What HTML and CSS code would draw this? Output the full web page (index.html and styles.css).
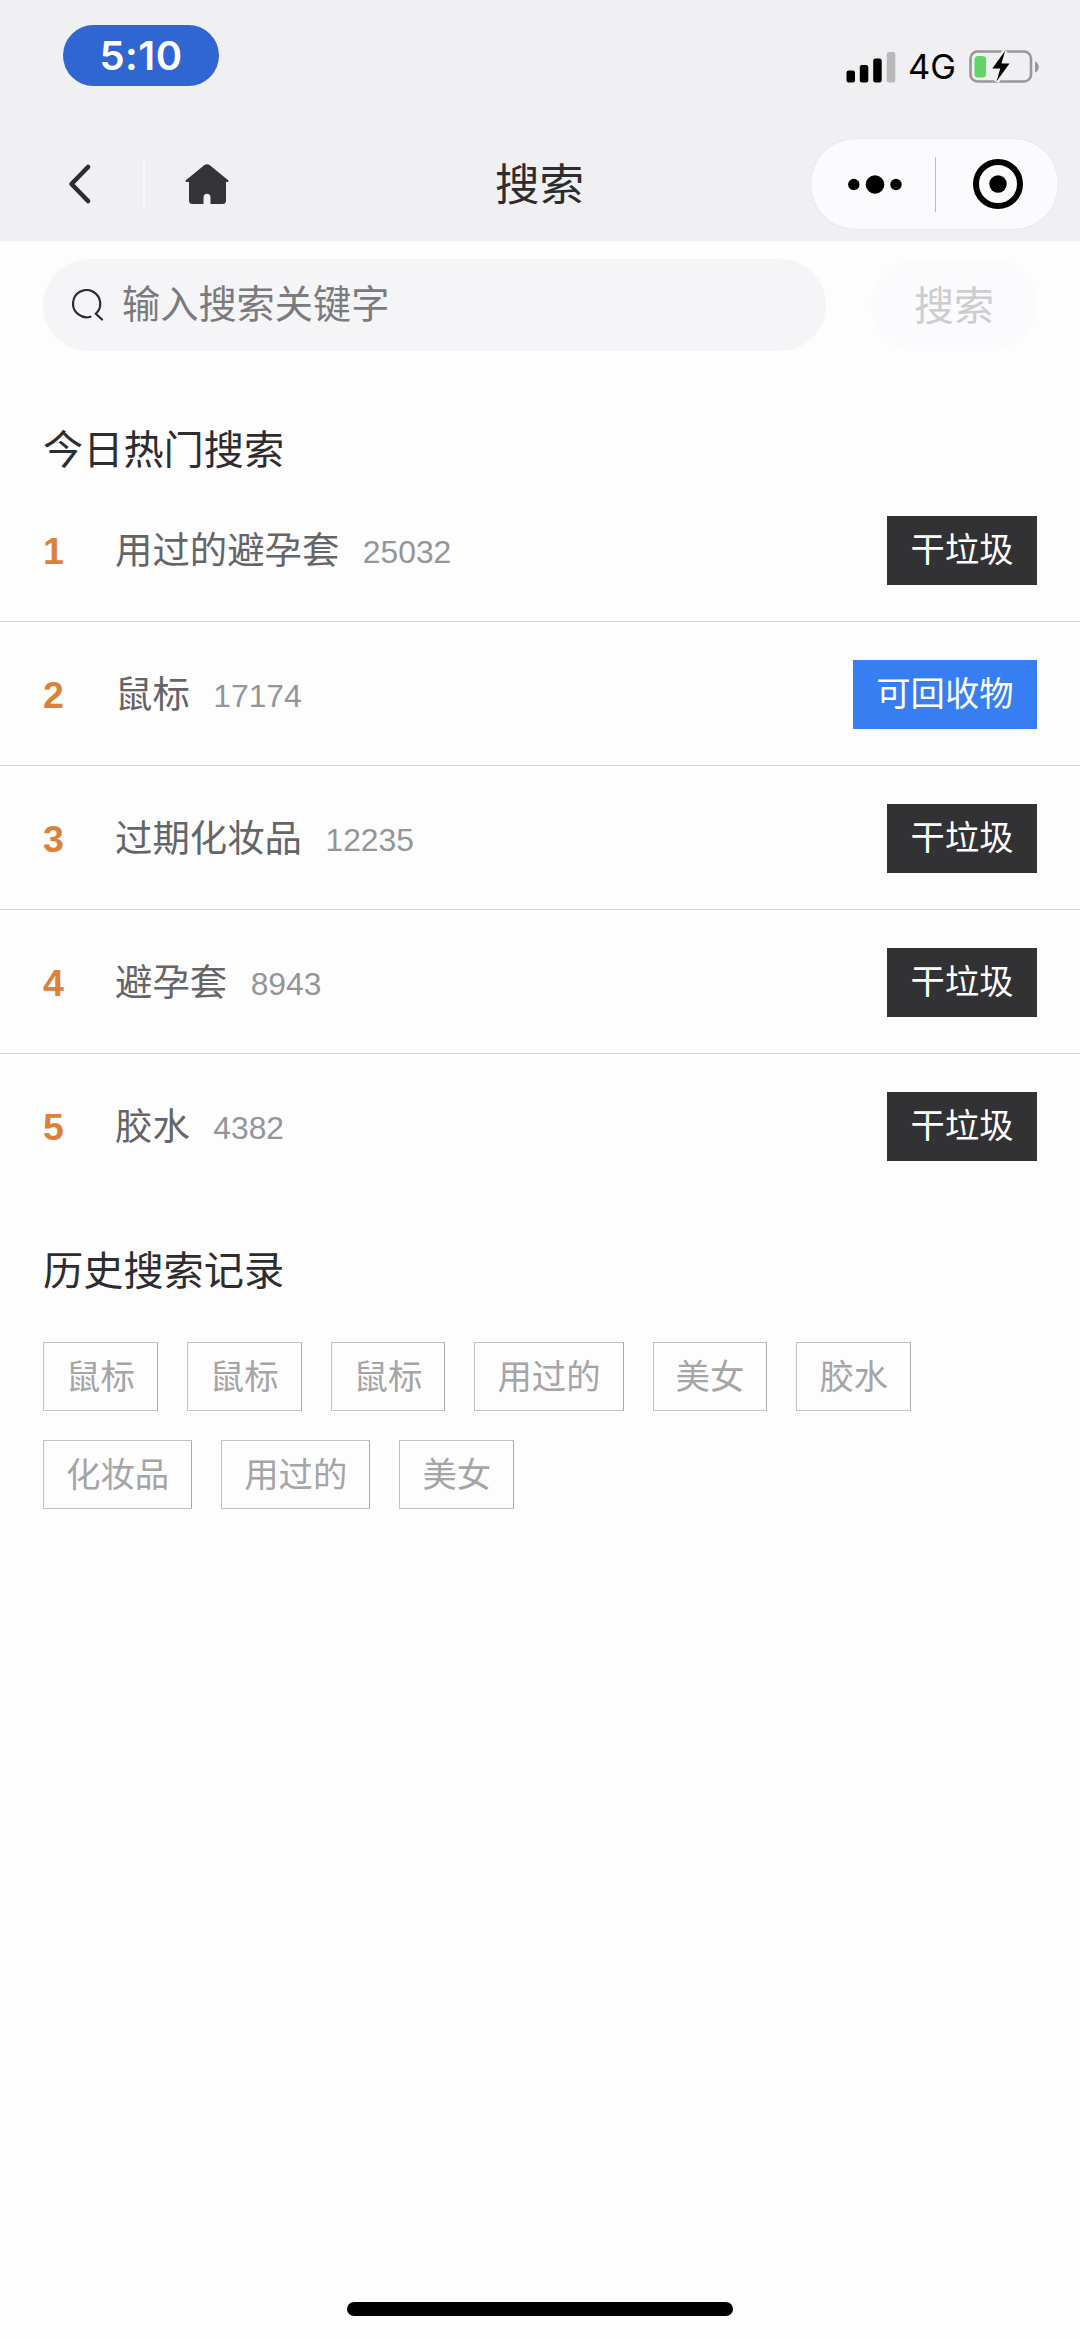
FILE: index.html
```html
<!DOCTYPE html>
<html lang="zh-CN">
<head>
<meta charset="utf-8">
<title>搜索</title>
<link rel="stylesheet" href="styles.css">
</head>
<body>
<div class="screen">
  <header class="header">
    <div class="status">
      <div class="time">5:10</div>
      <div class="status-right">
        <svg class="signal" width="50" height="32" viewBox="0 0 50 32">
          <rect x="0.5" y="19.5" width="8.5" height="12" rx="2.2"/>
          <rect x="13.8" y="14" width="8.5" height="17.5" rx="2.2"/>
          <rect x="27.2" y="7.5" width="8.5" height="24" rx="2.2"/>
          <rect x="40.8" y="1" width="8.5" height="30.5" rx="2.2" fill="#b9b8bb"/>
        </svg>
        <span class="network">4G</span>
        <svg class="battery" width="72" height="36" viewBox="0 0 72 36">
          <rect x="1.5" y="2.5" width="60.5" height="30" rx="7" fill="none" stroke="#99979b" stroke-width="2.6"/>
          <path d="M66 12.5c5 1.500 5 9.500 0 11z" fill="#99979b"/>
          <rect x="5.500" y="7" width="11.500" height="21.500" rx="3.500" fill="#62d367"/>
          <path d="M36 2 23.300 19.500h8L27.500 32.500 40.500 14.500h-8z" stroke="#f0eff1" stroke-width="5"/>
          <path d="M36 2 23.300 19.500h8L27.500 32.500 40.500 14.500h-8z"/>
        </svg>
      </div>
    </div>
    <div class="nav">
      <div class="nav-left">
        <svg width="24" height="42" viewBox="0 0 24 42"><path d="M20 4 3.500 21 20 38" fill="none" stroke="#2d2c2f" stroke-width="4.600" stroke-linecap="round" stroke-linejoin="round"/></svg>
        <span class="nav-divider"></span>
        <svg width="44" height="42" viewBox="0 0 44 42"><path d="M19.500 2Q22 .500 24.500 2L43.500 17.500Q44 19 42 19H41V37.500Q41 41 37.500 41H25.500V34.500Q25.500 30.800 22 30.800T18.500 34.500V41H7.500Q4 41 4 37.500V19H2Q0 19 .500 17.500Z" fill="#343336"/></svg>
      </div>
      <h1 class="title">搜索</h1>
      <div class="capsule">
        <svg width="54" height="20" viewBox="0 0 54 20"><circle cx="5.800" cy="10.500" r="5.700"/><circle cx="27" cy="10.500" r="9.300"/><circle cx="48" cy="10.500" r="5.700"/></svg>
        <span class="capsule-divider"></span>
        <svg width="50" height="50" viewBox="0 0 50 50"><circle cx="25" cy="25" r="22" fill="none" stroke="#000" stroke-width="6"/><circle cx="25" cy="25" r="8.700"/></svg>
      </div>
    </div>
  </header>

  <main class="content">
    <div class="search">
      <div class="search-box">
        <svg width="32" height="32" viewBox="0 0 32 32"><path d="M18.500 27.700A13.600 13.600 0 1 1 23.800 24.700L30 30.500" fill="none" stroke="#2d2c2f" stroke-width="2.200" stroke-linecap="round"/></svg>
        <span class="placeholder">输入搜索关键字</span>
      </div>
      <div class="search-button">搜索</div>
    </div>

    <h2 class="heading heading-hot">今日热门搜索</h2>
    <ol class="hot">
      <li class="row"><span class="rank">1</span><span class="name">用过的避孕套</span><span class="count">25032</span><span class="tag">干垃圾</span></li>
      <li class="row"><span class="rank">2</span><span class="name">鼠标</span><span class="count">17174</span><span class="tag tag-recycle">可回收物</span></li>
      <li class="row"><span class="rank">3</span><span class="name">过期化妆品</span><span class="count">12235</span><span class="tag">干垃圾</span></li>
      <li class="row"><span class="rank">4</span><span class="name">避孕套</span><span class="count">8943</span><span class="tag">干垃圾</span></li>
      <li class="row"><span class="rank">5</span><span class="name">胶水</span><span class="count">4382</span><span class="tag">干垃圾</span></li>
    </ol>

    <h2 class="heading heading-history">历史搜索记录</h2>
    <div class="history">
      <span class="chip">鼠标</span><span class="chip">鼠标</span><span class="chip">鼠标</span><span class="chip">用过的</span><span class="chip">美女</span><span class="chip">胶水</span><span class="chip">化妆品</span><span class="chip">用过的</span><span class="chip">美女</span>
    </div>
  </main>
  <div class="home-bar"></div>
</div>
</body>
</html>
```
FILE: styles.css
```css
* { box-sizing: border-box; }
body {
  margin: 0;
  background: #fefdfe;
  color: #2d2c2f;
  font-family: "Liberation Sans", "Noto Sans CJK SC", sans-serif;
}
svg { display: block; flex: none; }
h1, h2, ol { margin: 0; padding: 0; font-weight: 400; list-style: none; }

.screen {
  width: 1080px;
  height: 2339px;
  display: flex;
  flex-direction: column;
  overflow: hidden;
}

.header { height: 241px; background: #f0eff1; }
.status {
  height: 138px;
  padding: 25px 39px 0 63px;
  display: flex;
  justify-content: space-between;
  align-items: flex-start;
}
.time {
  width: 156px;
  height: 61px;
  border-radius: 31px;
  background: #2f66d2;
  color: #fff;
  font: 600 40px/62px Inter, sans-serif;
  letter-spacing: 0.5px;
  text-align: center;
}
.status-right { display: flex; align-items: center; padding-top: 24px; }
.network {
  width: 50px;
  margin: 0 11px 0 12px;
  color: #000;
  font: 400 34.5px/36px Inter, sans-serif;
}

.nav {
  height: 92px;
  padding: 0 21px 0 68px;
  display: grid;
  grid-template-columns: 427px 1fr 249px;
  align-items: center;
}
.nav-left { display: flex; align-items: center; }
.nav-divider { width: 2px; height: 52px; margin: 0 40px 0 51px; background: #f8f7f9; }
.title { padding-top: 4px; font-size: 44.5px; line-height: 64px; }
.capsule {
  height: 92px;
  padding: 0 35px 0 37px;
  display: flex;
  align-items: center;
  justify-content: space-between;
  border: 1px solid #e9e7ea;
  border-radius: 46px;
  background: #fbfafc;
}
.capsule-divider { width: 1px; height: 55px; margin-left: -5px; background: #bdbbbf; }

.search { display: flex; justify-content: space-between; padding: 18px 43px 0; }
.search-box {
  width: 783px;
  height: 92px;
  padding-left: 29px;
  display: flex;
  align-items: center;
  gap: 18px;
  border-radius: 46px;
  background: #f5f4f6;
}
.placeholder { color: #7b7a7d; font-size: 38.2px; line-height: 56px; }
.search-button {
  width: 166px;
  height: 92px;
  border-radius: 46px;
  background: #fbfafc;
  color: #cdccce;
  font-size: 40px;
  line-height: 94px;
  text-align: center;
}

.heading { padding-left: 43px; font-size: 40.2px; line-height: 60px; }
.heading-hot { margin: 70px 0 -3px; }
.row {
  height: 144px;
  padding: 1px 43px 0;
  display: flex;
  align-items: center;
  border-bottom: 1px solid #d6d4d8;
}
.row:last-child { border-bottom-color: transparent; }
.rank { width: 72px; padding-top: 1px; color: #dd8038; font-size: 37.5px; font-weight: 700; line-height: 44px; }
.name { padding-top: 2px; color: #656467; font-size: 37.4px; line-height: 54px; }
.count { margin-left: 23.5px; padding-top: 4px; color: #929699; font-size: 31.8px; line-height: 40px; }
.tag {
  height: 69px;
  margin-left: auto;
  padding: 0 23.5px;
  background: #323134;
  color: #fff;
  font-size: 34.3px;
  line-height: 68px;
}
.tag-recycle { background: #367ef2; }

.heading-history { margin-top: 44px; }
.history {
  padding: 40px 43px 0;
  display: flex;
  flex-wrap: wrap;
  gap: 29px;
}
.chip {
  height: 69px;
  padding: 0 22px;
  border: 1px solid #c3c1c5;
  border-right-color: #a9a8ab;
  color: #a5a4a7;
  font-size: 34.4px;
  line-height: 69px;
}

.home-bar {
  width: 386px;
  height: 14px;
  margin: auto auto 23px;
  border-radius: 7px;
  background: #000;
}
```
